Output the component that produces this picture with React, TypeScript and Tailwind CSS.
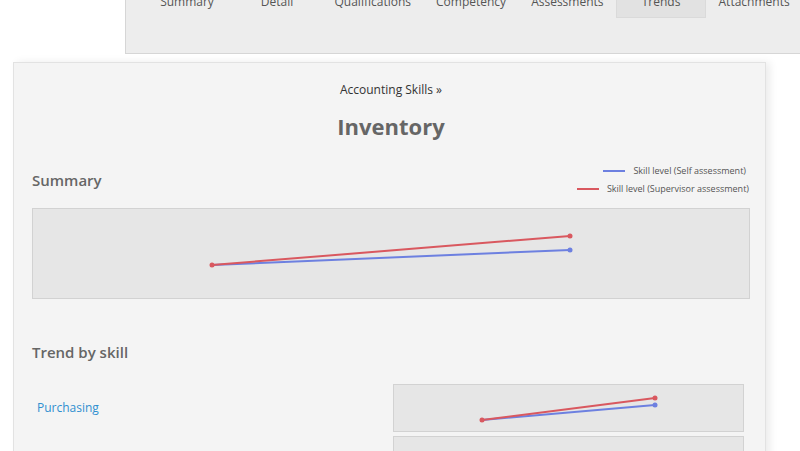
import React from "react";

/* ---------------- DATA ---------------- */

const tabs = [
  "Summary",
  "Detail",
  "Qualifications",
  "Competency",
  "Assessments",
  "Trends",
  "Attachments",
];

const RED = "#d9585f";
const BLUE = "#6d80e0";

/* ---------------- CHART ---------------- */

function TrendChart({
  w,
  h,
  start,
  self,
  sup,
}: {
  w: number;
  h: number;
  start: [number, number];
  self: [number, number];
  sup: [number, number];
}) {
  return (
    <svg width={w - 2} height={h - 2} className="block">
      <line x1={start[0]} y1={start[1]} x2={self[0]} y2={self[1]} stroke={BLUE} strokeWidth={2} />
      <circle cx={self[0]} cy={self[1]} r={2.5} fill={BLUE} />
      <line x1={start[0]} y1={start[1]} x2={sup[0]} y2={sup[1]} stroke={RED} strokeWidth={2} />
      <circle cx={sup[0]} cy={sup[1]} r={2.5} fill={RED} />
      <circle cx={start[0]} cy={start[1]} r={2.5} fill={RED} />
    </svg>
  );
}

/* ---------------- PAGE ---------------- */

export default function App() {
  return (
    <div
      className="w-[800px] h-[451px] overflow-hidden bg-white text-[#444]"
      style={{ fontFamily: '"Open Sans", "Liberation Sans", sans-serif' }}
    >
      {/* TOP TAB PANEL */}
      <div className="ml-[125px] -mt-[20px] h-[74px] w-[700px] bg-[#ededed] border border-[#d6d6d6] pl-[16px]">
        <div className="flex">
          {tabs.map((t) => (
            <div
              key={t}
              className={
                "min-w-[90px] px-[12.5px] h-[37px] pt-[13px] text-center text-[12px] leading-4 whitespace-nowrap text-[#555] " +
                (t === "Trends" ? "bg-[#e2e2e2] border-x border-b border-[#dadada]" : "")
              }
            >
              {t}
            </div>
          ))}
        </div>
      </div>

      {/* MAIN CARD */}
      <div className="ml-[13px] mt-[8px] w-[753px] h-[420px] bg-[#f4f4f4] border border-[#e2e2e2] shadow-[4px_0_8px_rgba(0,0,0,0.08)] pl-[18px] pr-[15px] pt-[19px]">
        <div className="text-center text-[12px] leading-4 text-[#333]">Accounting Skills »</div>
        <h1 className="mt-[13px] text-center text-[22px] leading-[30px] font-bold text-[#666]">
          Inventory
        </h1>

        {/* SUMMARY HEADER + LEGEND */}
        <div className="mt-[23px] flex items-center justify-between">
          <h2 className="text-[15px] leading-5 font-semibold text-[#666]">Summary</h2>
          <div className="flex flex-col items-end gap-[4px] pr-[1px] text-[9px] leading-[14px] text-[#555]">
            <div className="flex items-center gap-[8px] pr-[3px]">
              <span className="block w-[22px] h-[2px] bg-[#6d80e0]" />
              Skill level (Self assessment)
            </div>
            <div className="flex items-center gap-[8px]">
              <span className="block w-[22px] h-[2px] bg-[#d9585f]" />
              Skill level (Supervisor assessment)
            </div>
          </div>
        </div>

        {/* SUMMARY CHART */}
        <div className="mt-[12px] w-[718px] h-[91px] bg-[#e6e6e6] border border-[#d2d2d2]">
          <TrendChart w={718} h={91} start={[179, 56]} self={[537, 41]} sup={[537, 27]} />
        </div>

        {/* TREND BY SKILL */}
        <h2 className="mt-[43px] text-[15px] leading-5 font-semibold text-[#666]">Trend by skill</h2>

        <div className="mt-[22px] flex items-center">
          <div className="w-[361px] pl-[5px] text-[12px] text-[#2f8fd0]">Purchasing</div>
          <div className="w-[351px] h-[48px] bg-[#e6e6e6] border border-[#d2d2d2]">
            <TrendChart w={351} h={48} start={[88, 35]} self={[261, 20]} sup={[261, 13]} />
          </div>
        </div>

        <div className="mt-[4px] flex items-center">
          <div className="w-[361px]" />
          <div className="w-[351px] h-[48px] bg-[#e6e6e6] border border-[#d2d2d2]" />
        </div>
      </div>
    </div>
  );
}
